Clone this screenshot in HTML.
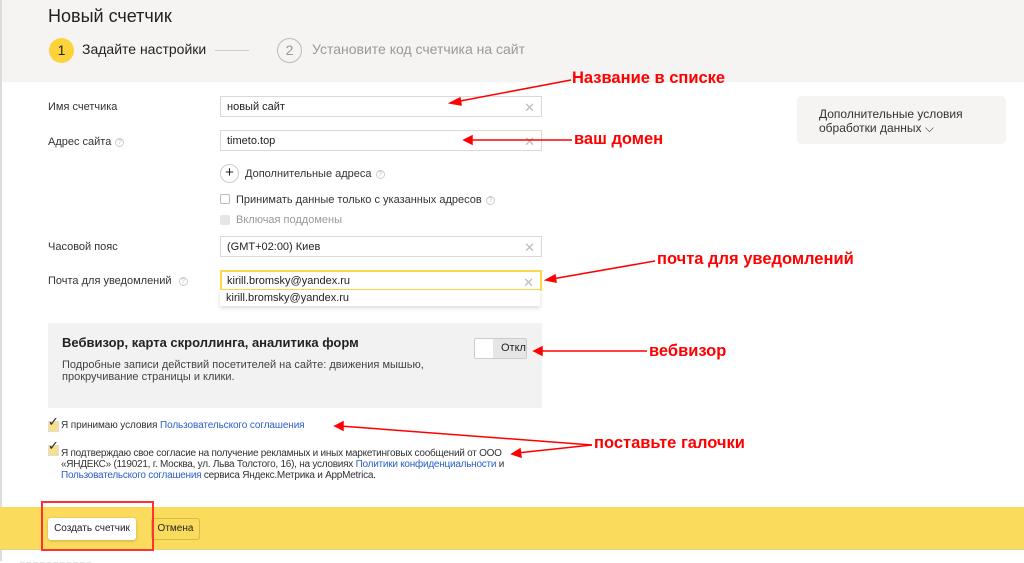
<!DOCTYPE html>
<html><head><meta charset="utf-8"><style>
*{margin:0;padding:0;box-sizing:border-box}
body{width:1024px;height:561px;overflow:hidden;background:#fff;font-family:"Liberation Sans",sans-serif;color:#222;position:relative}
.a{position:absolute;white-space:nowrap}
.lbl{font-size:11px;color:#333}
.inp{position:absolute;left:220px;width:322px;height:21px;border:1px solid #d9d9d9;font-size:11px;padding:4px 6px;color:#222}
.x{position:absolute;right:6px;top:3px;color:#bbb;font-size:13px}
.q{display:inline-block;width:9px;height:9px;border:1px solid #ccc;border-radius:50%;font-size:7px;color:#bbb;text-align:center;line-height:8px;vertical-align:middle;margin-left:4px}
.red{color:#f00;font-weight:bold;font-size:16.5px}
a{color:#2b5fc9;text-decoration:none}
.cb{position:absolute;width:11px;height:11px;background:#f6e08a;border:1px solid #ddd}
</style></head><body>
<div class="a" style="left:0;top:0;width:1024px;height:82px;background:#f5f4f2"></div>
<div class="a" style="left:0;top:0;width:2px;height:561px;background:#ddd"></div>
<div class="a" style="left:48px;top:6px;font-size:18px;color:#222">Новый счетчик</div>
<div class="a" style="left:49px;top:38px;width:25px;height:25px;border-radius:50%;background:#fcd33a;font-size:14px;text-align:center;line-height:25px">1</div>
<div class="a" style="left:82px;top:41px;font-size:14px;color:#222">Задайте настройки</div>
<div class="a" style="left:215px;top:50px;width:34px;height:1px;background:#ccc"></div>
<div class="a" style="left:277px;top:38px;width:25px;height:25px;border-radius:50%;border:1px solid #bbb;font-size:14px;text-align:center;line-height:23px;color:#999">2</div>
<div class="a" style="left:312px;top:41px;font-size:14px;color:#999">Установите код счетчика на сайт</div>

<div class="a lbl" style="left:48px;top:101px">Имя счетчика</div>
<div class="a lbl" style="left:48px;top:136px">Адрес сайта<span class="q">?</span></div>
<div class="a lbl" style="left:48px;top:241px">Часовой пояс</div>
<div class="a lbl" style="left:48px;top:275px">Почта для уведомлений<span class="q" style="margin-left:7px">?</span></div>

<div class="inp" style="top:96px">новый сайт<span class="x">✕</span></div>
<div class="inp" style="top:130px">timeto.top<span class="x">✕</span></div>
<div class="a" style="left:220px;top:164px;width:19px;height:19px;border:1px solid #ccc;border-radius:50%;text-align:center;line-height:16px;font-size:15px">+</div>
<div class="a lbl" style="left:245px;top:168px">Дополнительные адреса<span class="q">?</span></div>
<div class="a" style="left:220px;top:194px;width:10px;height:10px;border:1px solid #bbb;border-radius:2px"></div>
<div class="a lbl" style="left:236px;top:194px">Принимать данные только с указанных адресов<span class="q">?</span></div>
<div class="a" style="left:220px;top:215px;width:10px;height:10px;background:#e6e6e6;border-radius:2px"></div>
<div class="a lbl" style="left:236px;top:214px;color:#999">Включая поддомены</div>
<div class="inp" style="top:236px">(GMT+02:00) Киев<span class="x">✕</span></div>
<div class="inp" style="top:270px;border:2px solid #fcd84a;padding:3px 5px">kirill.bromsky@yandex.ru<span class="x">✕</span></div>
<div class="a" style="left:220px;top:290px;width:320px;height:16px;background:#fff;box-shadow:0 2px 4px rgba(0,0,0,.15);font-size:11px;padding:2px 6px">kirill.bromsky@yandex.ru</div>

<div class="a" style="left:797px;top:96px;width:209px;height:48px;background:#f5f4f2;border-radius:5px"></div>
<div class="a" style="left:819px;top:107px;font-size:12px;line-height:14px;color:#333">Дополнительные условия<br>обработки данных ⌵</div>

<div class="a" style="left:48px;top:323px;width:494px;height:85px;background:#f2f2f3"></div>
<div class="a" style="left:62px;top:335px;font-size:13px;font-weight:bold">Вебвизор, карта скроллинга, аналитика форм</div>
<div class="a" style="left:62px;top:359px;font-size:11px;line-height:12px;color:#444">Подробные записи действий посетителей на сайте: движения мышью,<br>прокручивание страницы и клики.</div>
<div class="a" style="left:474px;top:338px;width:53px;height:21px;background:#e6e6e6;border:1px solid #ccc;border-radius:2px;font-size:11px;padding:3px 0 0 26px">Откл</div>
<div class="a" style="left:475px;top:339px;width:18px;height:19px;background:#fff"></div>

<div class="cb" style="left:48px;top:421px"></div><div class="a" style="left:48px;top:414px;font-size:13px">✓</div>
<div class="a" style="left:61px;top:420px;font-size:10px;letter-spacing:-0.1px;color:#333">Я принимаю условия <a>Пользовательского соглашения</a></div>
<div class="cb" style="left:48px;top:445px"></div><div class="a" style="left:48px;top:438px;font-size:13px">✓</div>
<div class="a" style="left:61px;top:448px;font-size:10px;line-height:11px;letter-spacing:-0.25px;color:#333">Я подтверждаю свое согласие на получение рекламных и иных маркетинговых сообщений от ООО<br>«ЯНДЕКС» (119021, г. Москва, ул. Льва Толстого, 16), на условиях <a>Политики конфиденциальности</a> и<br><a>Пользовательского соглашения</a> сервиса Яндекс.Метрика и AppMetrica.</div>

<div class="a" style="left:0;top:507px;width:1024px;height:43px;background:#fbdb5c;border-bottom:1px solid #e4d08a"></div>
<div class="a" style="left:48px;top:518px;width:88px;height:22px;background:#fff;border-radius:3px;box-shadow:0 1px 3px rgba(0,0,0,.2);font-size:10px;text-align:center;line-height:22px">Создать счетчик</div>
<div class="a" style="left:151px;top:518px;width:49px;height:22px;border:1px solid #d5b94a;border-radius:3px;font-size:10px;text-align:center;line-height:20px">Отмена</div>
<div class="a" style="left:41px;top:501px;width:113px;height:50px;border:2px solid #f33"></div>

<div class="a red" style="left:572px;top:69px">Название в списке</div>
<div class="a red" style="left:574px;top:130px">ваш домен</div>
<div class="a red" style="left:657px;top:250px">почта для уведомлений</div>
<div class="a red" style="left:649px;top:342px">вебвизор</div>
<div class="a red" style="left:594px;top:434px">поставьте галочки</div>
<svg class="a" style="left:0;top:0" width="1024" height="561">
<g stroke="#f00" stroke-width="1.5" fill="#f00">
<line x1="571" y1="80" x2="455" y2="102"/><polygon points="450,103 460,98 461,105"/>
<line x1="572" y1="140" x2="470" y2="140"/><polygon points="464,140 472,136 472,144"/>
<line x1="655" y1="261" x2="552" y2="279"/><polygon points="546,280 555,275 556,282"/>
<line x1="647" y1="351" x2="540" y2="351"/><polygon points="534,351 542,347 542,355"/>
<line x1="592" y1="445" x2="340" y2="426"/><polygon points="335,426 343,422 343,430"/>
<line x1="592" y1="445" x2="517" y2="453"/><polygon points="512,454 520,449 521,457"/>
</g></svg>
<div class="a" style="left:20px;top:554px;font-size:8px;color:#ccc">_ _ _ _ _ _ _ _ _ _ _</div>
</body></html>
